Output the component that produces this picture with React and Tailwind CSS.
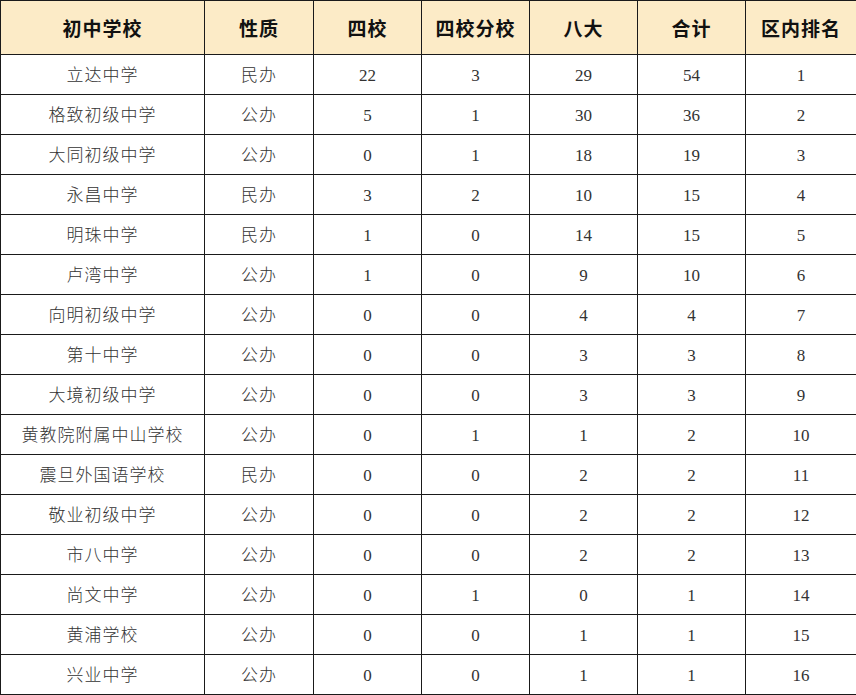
const rows = [
  ["立达中学", "民办", 22, 3, 29, 54, 1],
  ["格致初级中学", "公办", 5, 1, 30, 36, 2],
  ["大同初级中学", "公办", 0, 1, 18, 19, 3],
  ["永昌中学", "民办", 3, 2, 10, 15, 4],
  ["明珠中学", "民办", 1, 0, 14, 15, 5],
  ["卢湾中学", "公办", 1, 0, 9, 10, 6],
  ["向明初级中学", "公办", 0, 0, 4, 4, 7],
  ["第十中学", "公办", 0, 0, 3, 3, 8],
  ["大境初级中学", "公办", 0, 0, 3, 3, 9],
  ["黄教院附属中山学校", "公办", 0, 1, 1, 2, 10],
  ["震旦外国语学校", "民办", 0, 0, 2, 2, 11],
  ["敬业初级中学", "公办", 0, 0, 2, 2, 12],
  ["市八中学", "公办", 0, 0, 2, 2, 13],
  ["尚文中学", "公办", 0, 1, 0, 1, 14],
  ["黄浦学校", "公办", 0, 0, 1, 1, 15],
  ["兴业中学", "公办", 0, 0, 1, 1, 16],
];

const heads = ["初中学校", "性质", "四校", "四校分校", "八大", "合计", "区内排名"];
const widths = ["w-[204px]", "w-[109px]", "w-[108px]", "w-[108px]", "w-[108px]", "w-[108px]", "w-[111px]"];

export default function App() {
  return (
    <div className="w-[856px] h-[695px] overflow-hidden bg-white font-['Liberation_Serif','Noto_Sans_CJK_SC',serif]">
      <table className="table-fixed border-collapse w-[856px]">
        <colgroup>
          {widths.map((w, i) => (
            <col key={i} className={w} />
          ))}
        </colgroup>
        <thead>
          <tr className="h-[54px] bg-[#fcebc7]">
            {heads.map((h) => (
              <th key={h} className="border border-[#1a1a1a] pt-[5px] text-[19px] font-bold text-[#111] text-center tracking-[1px]">
                {h}
              </th>
            ))}
          </tr>
        </thead>
        <tbody>
          {rows.map((r) => (
            <tr key={r[0]} className="h-[40px]">
              {r.map((c, i) => (
                <td
                  key={i}
                  className={
                    "border border-[#1a1a1a] pt-[3px] text-center text-[#333] " +
                    (i < 2 ? "text-[17px] font-light tracking-[1px]" : "text-[17px]")
                  }
                >
                  {c}
                </td>
              ))}
            </tr>
          ))}
        </tbody>
      </table>
    </div>
  );
}
